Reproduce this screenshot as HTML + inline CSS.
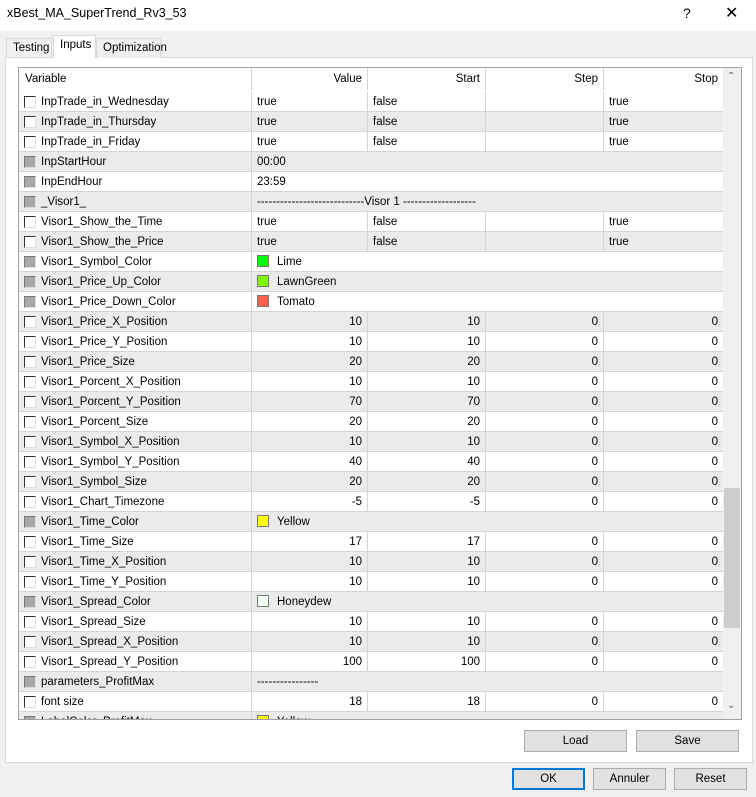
<!DOCTYPE html>
<html><head><meta charset="utf-8"><style>
*{margin:0;padding:0;box-sizing:border-box}
body{width:756px;height:797px;background:#f0f0f0;font-family:"Liberation Sans",Arial,sans-serif;font-size:11.5px;color:#000;position:relative;overflow:hidden}
.abs{position:absolute}
#title{left:0;top:0;width:756px;height:31px;background:#fff}
#title .t{left:7px;top:6px;font-size:12.5px}
.tab{position:absolute;top:38px;height:20px;border:1px solid #d9d9d9;border-bottom:none;background:#f0f0f0;padding:3px 6px 0 6px}
#panel{left:5px;top:57px;width:748px;height:706px;border:1px solid #d9d9d9;background:#fff}
#grid{left:18px;top:67px;width:724px;height:653px;border:1px solid #a0a0a0;background:#fff;overflow:hidden}
.row{position:absolute;left:0;height:20px;width:704px;border-bottom:1px solid #d4d4d4}
.g{background:#ebebeb}
.c{position:absolute;top:0;height:19px;line-height:21px;border-right:1px solid #d4d4d4;padding:0 5px;white-space:nowrap;overflow:hidden}
.v{left:0;width:233px;padding-left:22px}
.c1{left:233px;width:116px}
.c2{left:349px;width:118px}
.c3{left:467px;width:118px}
.c4{left:585px;width:119px;border-right:none}
.r{text-align:right}
.m{left:233px;width:471px;border-right:none}
.cb{position:absolute;left:5px;top:4px;width:12px;height:12px;border:1px solid #333;border-right-color:#ddd;border-bottom-color:#ddd;background:#fff}
.cb.d{background:#a8a8a8;border-color:#7a7a7a #ddd #ddd #7a7a7a}
.sw{display:inline-block;width:12px;height:12px;border:1px solid #777;vertical-align:-2px;margin-right:8px}
#sb{left:704px;top:0;width:18px;height:651px;background:#f0f0f0}
.btn{position:absolute;height:22px;border:1px solid #adadad;background:#e1e1e1;text-align:center;line-height:20px;font-size:11.5px}
</style></head><body>
<div id="title" class="abs"><div class="t abs">xBest_MA_SuperTrend_Rv3_53</div>
<div class="abs" style="left:683px;top:5px;font-size:14px">?</div>
<div class="abs" style="left:725px;top:3px;font-size:16px">✕</div></div>
<div class="tab" style="left:6px;width:46px">Testing</div>
<div id="panel" class="abs"></div>
<div class="tab" style="left:53px;top:35px;height:23px;background:#fff;width:43px;z-index:2;padding-top:3px">Inputs</div>
<div class="tab" style="left:96px;width:65px">Optimization</div>
<div id="grid" class="abs">
<div class="row" style="top:0;height:23px;border-bottom:none">
<div class="c v" style="padding-left:6px;height:22px;line-height:23px">Variable</div>
<div class="c c1 r" style="height:22px;line-height:23px">Value</div>
<div class="c c2 r" style="height:22px;line-height:23px">Start</div>
<div class="c c3 r" style="height:22px;line-height:23px">Step</div>
<div class="c c4 r" style="height:22px;line-height:23px">Stop</div></div>
<div id="rows"></div>
<div id="sb" class="abs">
<div class="abs" style="left:4px;top:3px;font-size:10px;color:#606060">&#8963;</div>
<div class="abs" style="left:1px;top:420px;width:16px;height:140px;background:#cdcdcd"></div>
<div class="abs" style="left:4px;top:632px;font-size:10px;color:#606060">&#8964;</div></div>
</div>
<div class="btn" style="left:524px;top:730px;width:103px">Load</div>
<div class="btn" style="left:636px;top:730px;width:103px">Save</div>
<div class="btn" style="left:512px;top:768px;width:73px;border:2px solid #0078d7;line-height:18px">OK</div>
<div class="btn" style="left:593px;top:768px;width:73px">Annuler</div>
<div class="btn" style="left:674px;top:768px;width:73px">Reset</div>
<script>
var R=[
["InpTrade_in_Wednesday",0,"true","false","","true"],
["InpTrade_in_Thursday",0,"true","false","","true"],
["InpTrade_in_Friday",0,"true","false","","true"],
["InpStartHour",1,"00:00"],
["InpEndHour",1,"23:59"],
["_Visor1_",1,"----------------------------Visor 1 -------------------"],
["Visor1_Show_the_Time",0,"true","false","","true"],
["Visor1_Show_the_Price",0,"true","false","","true"],
["Visor1_Symbol_Color",2,"Lime","#00ff00"],
["Visor1_Price_Up_Color",2,"LawnGreen","#7cfc00"],
["Visor1_Price_Down_Color",2,"Tomato","#ff6347"],
["Visor1_Price_X_Position",3,"10","10","0","0"],
["Visor1_Price_Y_Position",3,"10","10","0","0"],
["Visor1_Price_Size",3,"20","20","0","0"],
["Visor1_Porcent_X_Position",3,"10","10","0","0"],
["Visor1_Porcent_Y_Position",3,"70","70","0","0"],
["Visor1_Porcent_Size",3,"20","20","0","0"],
["Visor1_Symbol_X_Position",3,"10","10","0","0"],
["Visor1_Symbol_Y_Position",3,"40","40","0","0"],
["Visor1_Symbol_Size",3,"20","20","0","0"],
["Visor1_Chart_Timezone",3,"-5","-5","0","0"],
["Visor1_Time_Color",2,"Yellow","#ffff00"],
["Visor1_Time_Size",3,"17","17","0","0"],
["Visor1_Time_X_Position",3,"10","10","0","0"],
["Visor1_Time_Y_Position",3,"10","10","0","0"],
["Visor1_Spread_Color",2,"Honeydew","#f0fff0"],
["Visor1_Spread_Size",3,"10","10","0","0"],
["Visor1_Spread_X_Position",3,"10","10","0","0"],
["Visor1_Spread_Y_Position",3,"100","100","0","0"],
["parameters_ProfitMax",1,"----------------"],
["font size",3,"18","18","0","0"],
["LabelColor_ProfitMax",2,"Yellow","#ffff00"]];
var h="";
R.forEach(function(r,i){
var t=24+20*i;var cls="row"+(i%2?" g":"");
h+='<div class="'+cls+'" style="top:'+t+'px"><div class="c v"><span class="cb'+(r[1]==1||r[1]==2?' d':'')+'"></span>'+r[0]+'</div>';
if(r[1]==0)h+='<div class="c c1">'+r[2]+'</div><div class="c c2">'+r[3]+'</div><div class="c c3">'+r[4]+'</div><div class="c c4">'+r[5]+'</div>';
else if(r[1]==1)h+='<div class="c m">'+r[2]+'</div>';
else if(r[1]==2)h+='<div class="c m"><span class="sw" style="background:'+r[3]+'"></span>'+r[2]+'</div>';
else h+='<div class="c c1 r">'+r[2]+'</div><div class="c c2 r">'+r[3]+'</div><div class="c c3 r">'+r[4]+'</div><div class="c c4 r">'+r[5]+'</div>';
h+='</div>';});
document.getElementById("rows").innerHTML=h;
</script>
</body></html>
